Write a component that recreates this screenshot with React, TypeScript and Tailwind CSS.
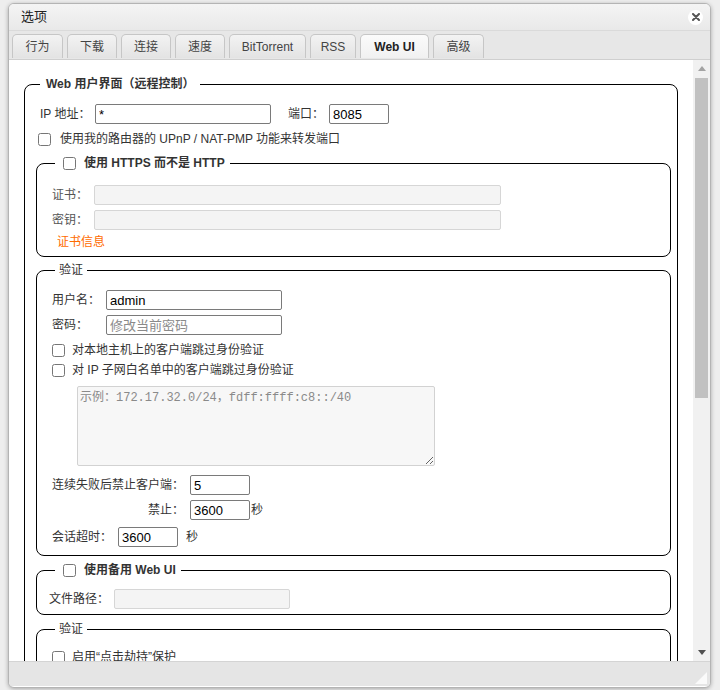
import React from "react";

const tabs = [
  { label: "行为", w: "w-[51px]" },
  { label: "下载", w: "w-[50px]" },
  { label: "连接", w: "w-[50px]" },
  { label: "速度", w: "w-[50px]" },
  { label: "BitTorrent", w: "w-[77px]" },
  { label: "RSS", w: "w-[46px]" },
  { label: "Web UI", w: "w-[69px]", active: true },
  { label: "高级", w: "w-[51px]" },
];

function Check() {
  return <input type="checkbox" className="m-0 h-[13px] w-[13px] shrink-0" />;
}

function TextBox({
  w,
  value,
  placeholder,
  disabled,
}: {
  w: string;
  value?: string;
  placeholder?: string;
  disabled?: boolean;
}) {
  return (
    <input
      type="text"
      defaultValue={value}
      placeholder={placeholder}
      disabled={disabled}
      className={`${w} h-[20px] shrink-0 rounded-[2px] border px-[3px] text-[13px] text-black placeholder:text-[#8a8a8a] ${
        disabled ? "border-[#d6d6d6] bg-[#f4f4f4]" : "border-[#7a7a7a] bg-white"
      }`}
    />
  );
}

export default function App() {
  return (
    <div className="h-[690px] w-[720px] overflow-hidden bg-[#eeeeee] pl-[8px] pt-[3px] font-['Liberation_Sans','Noto_Sans_CJK_SC',sans-serif] text-[12px] text-[#333]">
      <div className="flex h-[685px] w-[703px] flex-col overflow-hidden rounded-[6px] border border-[#b4b4b4] bg-white shadow-[0_1px_4px_rgba(0,0,0,0.3)]">
        {/* title */}
        <div className="flex h-[26px] shrink-0 items-center justify-between bg-gradient-to-b from-[#f4f4f4] to-[#e9e9e9] pl-[12px] pr-[7px]">
          <span className="text-[13px] text-[#222]">选项</span>
          <span className="flex h-[15px] w-[15px] items-center justify-center rounded-full bg-white">
            <svg width="8" height="8" viewBox="0 0 8 8">
              <path d="M1 1L7 7M7 1L1 7" stroke="#555" strokeWidth="2" strokeLinecap="round" />
            </svg>
          </span>
        </div>

        {/* tabs */}
        <div className="flex h-[30px] shrink-0 items-end gap-[4px] border-b border-t border-b-[#cfcfcf] border-t-[#dadada] bg-[#e7e7e7] pb-[1px] pl-[3px]">
          {tabs.map((t) => (
            <div
              key={t.label}
              className={`${t.w} flex h-[24px] items-center justify-center rounded-t-[5px] border border-b-0 border-[#c6c6c6] ${
                t.active
                  ? "bg-gradient-to-b from-[#fbfbfb] to-[#f1f1f1] font-bold text-[#222]"
                  : "bg-gradient-to-b from-[#f3f3f3] to-[#e3e3e3] text-[#444]"
              }`}
            >
              {t.label}
            </div>
          ))}
        </div>

        {/* body */}
        <div className="flex h-[601px] shrink-0">
          <div className="h-full flex-1 overflow-hidden px-[15px] pt-[16px]">
            <fieldset className="rounded-[8px] border border-black p-0">
              <legend className="ml-[15px] h-4 px-[6px] font-bold leading-4 text-[#333]">
                Web 用户界面（远程控制）
              </legend>
              <div className="pl-[11px] pr-[6px] pt-[12px]">
                <div className="flex h-[20px] items-center pl-[4px]">
                  <span className="w-[55px] shrink-0">IP 地址：</span>
                  <TextBox w="w-[176px]" value="*" />
                  <span className="ml-[17px] w-[41px] shrink-0">端口：</span>
                  <TextBox w="w-[60px]" value="8085" />
                </div>
                <div className="mt-[7px] flex h-[16px] items-center gap-[9px] pl-[2px]">
                  <Check />
                  <span>使用我的路由器的 UPnP / NAT-PMP 功能来转发端口</span>
                </div>

                {/* https */}
                <fieldset className="mt-[8px] rounded-[8px] border border-black p-0">
                  <legend className="ml-[18px] flex h-4 items-center gap-[8px] pl-[8px] pr-[5px] font-bold leading-4">
                    <Check />
                    <span>使用 HTTPS 而不是 HTTP</span>
                  </legend>
                  <div className="pb-[6px] pl-[15px] pt-[14px] text-[#555]">
                    <div className="flex h-[20px] items-center">
                      <span className="w-[42px] shrink-0">证书：</span>
                      <TextBox w="w-[407px]" disabled />
                    </div>
                    <div className="mt-[5px] flex h-[20px] items-center">
                      <span className="w-[42px] shrink-0">密钥：</span>
                      <TextBox w="w-[407px]" disabled />
                    </div>
                    <div className="mt-[4px] h-4 pl-[5px] leading-4 text-[#ff6c00]">证书信息</div>
                  </div>
                </fieldset>

                {/* auth */}
                <fieldset className="mt-[5px] rounded-[8px] border border-black p-0">
                  <legend className="ml-[18px] h-4 px-[4px] leading-4">验证</legend>
                  <div className="pb-[8px] pl-[15px] pt-[12px]">
                    <div className="flex h-[20px] items-center">
                      <span className="w-[54px] shrink-0">用户名：</span>
                      <TextBox w="w-[176px]" value="admin" />
                    </div>
                    <div className="mt-[5px] flex h-[20px] items-center">
                      <span className="w-[54px] shrink-0">密码：</span>
                      <TextBox w="w-[176px]" placeholder="修改当前密码" />
                    </div>
                    <div className="mt-[7px] flex h-[16px] items-center gap-[7px]">
                      <Check />
                      <span>对本地主机上的客户端跳过身份验证</span>
                    </div>
                    <div className="mt-[4px] flex h-[16px] items-center gap-[7px]">
                      <Check />
                      <span>对 IP 子网白名单中的客户端跳过身份验证</span>
                    </div>
                    <textarea
                      placeholder="示例：172.17.32.0/24，fdff:ffff:c8::/40"
                      disabled
                      className="ml-[25px] mt-[8px] block h-[80px] w-[358px] rounded-[2px] border border-[#d2d2d2] bg-[#f7f7f7] px-[2px] py-[1px] font-['Liberation_Mono','Noto_Sans_CJK_SC',monospace] text-[12px] leading-[20px] placeholder:text-[#8a8a8a]"
                    />
                    <div className="mt-[9px] flex h-[20px] items-center">
                      <span className="w-[138px] shrink-0">连续失败后禁止客户端：</span>
                      <TextBox w="w-[60px]" value="5" />
                    </div>
                    <div className="mt-[5px] flex h-[20px] items-center">
                      <span className="w-[132px] shrink-0 text-right">禁止：</span>
                      <span className="w-[6px] shrink-0" />
                      <TextBox w="w-[60px]" value="3600" />
                      <span className="ml-[1px]">秒</span>
                    </div>
                    <div className="mt-[7px] flex h-[20px] items-center">
                      <span className="w-[66px] shrink-0">会话超时：</span>
                      <TextBox w="w-[60px]" value="3600" />
                      <span className="ml-[8px]">秒</span>
                    </div>
                  </div>
                </fieldset>

                {/* alt web ui */}
                <fieldset className="mt-[6px] rounded-[8px] border border-black p-0">
                  <legend className="ml-[18px] flex h-4 items-center gap-[8px] pl-[8px] pr-[5px] font-bold leading-4">
                    <Check />
                    <span>使用备用 Web UI</span>
                  </legend>
                  <div className="pb-[5px] pl-[12px] pt-[11px]">
                    <div className="flex h-[20px] items-center">
                      <span className="w-[65px] shrink-0">文件路径：</span>
                      <TextBox w="w-[176px]" disabled />
                    </div>
                  </div>
                </fieldset>

                {/* security */}
                <fieldset className="mt-[6px] rounded-[8px] border border-black p-0">
                  <legend className="ml-[18px] h-4 px-[4px] leading-4">验证</legend>
                  <div className="pb-[8px] pl-[15px] pt-[12px]">
                    <div className="flex h-[16px] items-center gap-[7px]">
                      <Check />
                      <span>启用“点击劫持”保护</span>
                    </div>
                  </div>
                </fieldset>
              </div>
            </fieldset>
          </div>

          {/* scrollbar */}
          <div className="flex w-[17px] shrink-0 flex-col bg-[#f1f1f1]">
            <div className="flex h-[17px] items-center justify-center">
              <svg width="8" height="5" viewBox="0 0 8 5">
                <path d="M4 0L8 5H0Z" fill="#a3a3a3" />
              </svg>
            </div>
            <div className="mx-[2px] mt-[1px] h-[320px] bg-[#c1c1c1]" />
            <div className="flex-1" />
            <div className="flex h-[17px] items-center justify-center">
              <svg width="8" height="5" viewBox="0 0 8 5">
                <path d="M0 0H8L4 5Z" fill="#505050" />
              </svg>
            </div>
          </div>
        </div>

        {/* footer */}
        <div className="flex h-[25px] shrink-0 items-end justify-end border-t border-[#d4d4d4] bg-[#e5e5e5] pb-[2px] pr-[3px]">
          <svg width="12" height="12" viewBox="0 0 12 12">
            <path d="M12 0V12H0Z" fill="#fafafa" />
          </svg>
        </div>
      </div>
    </div>
  );
}
